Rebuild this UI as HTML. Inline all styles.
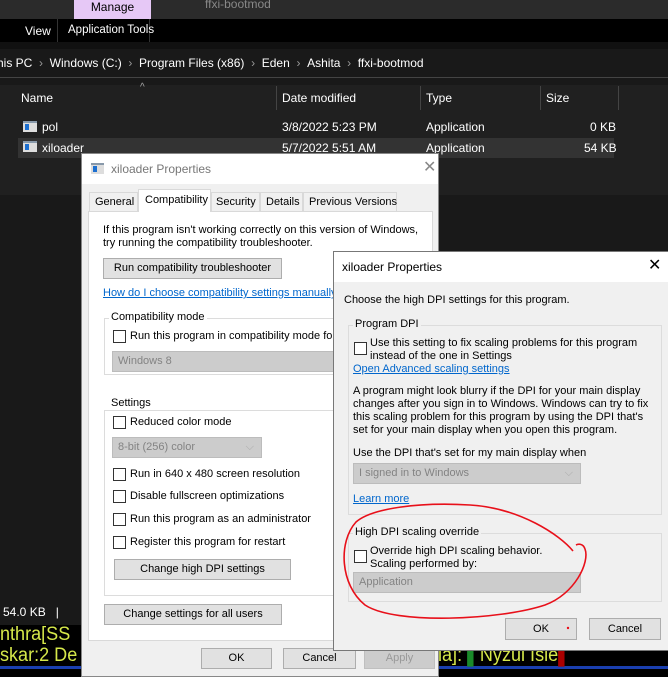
<!DOCTYPE html>
<html><head><style>
*{margin:0;padding:0;box-sizing:border-box}
body{width:668px;height:677px;overflow:hidden;background:#191919;font-family:"Liberation Sans",sans-serif;font-size:11px;position:relative;color:#000}
.a{position:absolute;white-space:nowrap}
.w{color:#fff;font-size:12px}
.btn{position:absolute;background:#e1e1e1;border:1px solid #adadad;text-align:center;font-size:11px}
.cb{position:absolute;width:13px;height:13px;border:1px solid #333;background:#fff}
.sel{position:absolute;background:#ccc;border:1px solid #bcbcbc;color:#838383;padding-left:5px}
.gb{position:absolute;border:1px solid #dcdcdc}
.lk{color:#0066cc;text-decoration:underline}
.term{position:absolute;color:#d6e84a;font-family:'Liberation Sans',sans-serif;font-size:19px;transform:scaleX(0.95);transform-origin:0 0;white-space:nowrap;line-height:21px}
</style></head><body>
<!-- explorer -->
<div class="a" style="left:0;top:0;width:668px;height:19px;background:#2b2b2b"></div>
<div class="a" style="left:74px;top:0;width:77px;height:19px;background:#e6c8f6;color:#000;text-align:center;line-height:14px;font-size:12px">Manage</div>
<div class="a" style="left:205px;top:-3px;color:#888;font-size:12px">ffxi-bootmod</div>
<div class="a" style="left:0;top:19px;width:668px;height:23px;background:#000"></div>
<div class="a w" style="left:25px;top:24px">View</div>
<div class="a" style="left:57px;top:19px;width:1px;height:23px;background:#333"></div>
<div class="a" style="left:149px;top:19px;width:1px;height:23px;background:#333"></div>
<div class="a w" style="left:68px;top:24px;font-size:11.5px">Application Tools</div>
<div class="a" style="left:0;top:42px;width:668px;height:7px;background:#111"></div>
<div class="a" style="left:0;top:77px;width:668px;height:1px;background:#444"></div>
<div class="a w" style="left:-3px;top:56px">his PC&nbsp;&nbsp;<span style="color:#999">›</span>&nbsp;&nbsp;Windows (C:)&nbsp;&nbsp;<span style="color:#999">›</span>&nbsp;&nbsp;Program Files (x86)&nbsp;&nbsp;<span style="color:#999">›</span>&nbsp;&nbsp;Eden&nbsp;&nbsp;<span style="color:#999">›</span>&nbsp;&nbsp;Ashita&nbsp;&nbsp;<span style="color:#999">›</span>&nbsp;&nbsp;ffxi-bootmod</div>
<div class="a" style="left:0;top:85px;width:668px;height:110px;background:#202020"></div>
<div class="a" style="left:140px;top:82px;color:#aaa;font-size:10px">^</div>
<div class="a w" style="left:21px;top:91px">Name</div>
<div class="a w" style="left:282px;top:91px">Date modified</div>
<div class="a w" style="left:426px;top:91px">Type</div>
<div class="a w" style="left:546px;top:91px">Size</div>
<div class="a" style="left:276px;top:86px;width:1px;height:24px;background:#444"></div>
<div class="a" style="left:420px;top:86px;width:1px;height:24px;background:#444"></div>
<div class="a" style="left:540px;top:86px;width:1px;height:24px;background:#444"></div>
<div class="a" style="left:618px;top:86px;width:1px;height:24px;background:#444"></div>
<div class="a" style="left:18px;top:138px;width:596px;height:20px;background:#333"></div>
<div class="a" style="left:23px;top:121px;width:14px;height:11px;background:#ddd;border-top:2px solid #89a"><div style="margin:1px 0 0 2px;width:4px;height:6px;background:#1c6fd0"></div></div>
<div class="a" style="left:23px;top:141px;width:14px;height:11px;background:#ddd;border-top:2px solid #89a"><div style="margin:1px 0 0 2px;width:4px;height:6px;background:#1c6fd0"></div></div>
<div class="a w" style="left:42px;top:120px">pol</div>
<div class="a w" style="left:42px;top:141px">xiloader</div>
<div class="a w" style="left:282px;top:120px">3/8/2022 5:23 PM</div>
<div class="a w" style="left:282px;top:141px">5/7/2022 5:51 AM</div>
<div class="a w" style="left:426px;top:120px">Application</div>
<div class="a w" style="left:426px;top:141px">Application</div>
<div class="a w" style="left:590px;top:120px">0 KB</div>
<div class="a w" style="left:584px;top:141px">54 KB</div>
<div class="a w" style="left:3px;top:605px">54.0 KB&nbsp;&nbsp;&nbsp;|</div>
<div class="a" style="left:0;top:625px;width:668px;height:52px;background:#000"></div>
<div class="term" style="left:0;top:624px">nthra[SS<br>skar:2 De</div>
<div class="a" style="left:0;top:666px;width:668px;height:3px;background:#1a3fb0"></div>
<div class="term" style="left:432px;top:645px">ria]: <span style="color:#1a8a2a">▌</span>Nyzul Isle<span style="color:#a00">▌</span></div>
<!-- dialog 1 -->
<div class="a" style="left:81px;top:153px;width:358px;height:524px;background:#f0f0f0;border:1px solid #888">
 <div class="a" style="left:0;top:0;width:356px;height:30px;background:#fff"></div>
 <div class="a" style="left:9px;top:9px;width:13px;height:11px;background:#ddd;border-top:2px solid #89a"><div style="margin:1px 0 0 2px;width:4px;height:6px;background:#1c6fd0"></div></div>
 <div class="a" style="left:29px;top:8px;color:#777;font-size:12px">xiloader Properties</div>
 <div class="a" style="left:341px;top:3px;color:#888;font-size:16px">✕</div>
 <div class="a" style="left:6px;top:57px;width:345px;height:430px;background:#fff;border:1px solid #d9d9d9"></div>
 <div class="a" style="left:7px;top:38px;width:49px;height:19px;border:1px solid #d9d9d9;border-bottom:0;background:#f0f0f0;padding:3px 0 0 5px">General</div>
 <div class="a" style="left:56px;top:35px;width:73px;height:23px;border:1px solid #d9d9d9;border-bottom:0;background:#fff;padding:4px 0 0 6px">Compatibility</div>
 <div class="a" style="left:129px;top:38px;width:49px;height:19px;border:1px solid #d9d9d9;border-bottom:0;background:#f0f0f0;padding:3px 0 0 4px">Security</div>
 <div class="a" style="left:178px;top:38px;width:43px;height:19px;border:1px solid #d9d9d9;border-bottom:0;background:#f0f0f0;padding:3px 0 0 5px">Details</div>
 <div class="a" style="left:221px;top:38px;width:94px;height:19px;border:1px solid #d9d9d9;border-bottom:0;background:#f0f0f0;padding:3px 0 0 5px">Previous Versions</div>
 <div class="a" style="left:21px;top:70px;line-height:13px">If this program isn't working correctly on this version of Windows,<br>try running the compatibility troubleshooter.</div>
 <div class="btn" style="left:21px;top:104px;width:179px;height:21px;line-height:19px">Run compatibility troubleshooter</div>
 <div class="a lk" style="left:21px;top:133px">How do I choose compatibility settings manually?</div>
 <div class="gb" style="left:22px;top:164px;width:260px;height:57px"></div>
 <div class="a" style="left:27px;top:157px;background:#fff;padding:0 2px">Compatibility mode</div>
 <div class="cb" style="left:31px;top:176px"></div>
 <div class="a" style="left:48px;top:176px">Run this program in compatibility mode for:</div>
 <div class="sel" style="left:30px;top:197px;width:240px;height:21px;line-height:19px">Windows 8</div>
 <div class="gb" style="left:22px;top:256px;width:260px;height:186px"></div>
 <div class="a" style="left:27px;top:243px;background:#fff;padding:0 2px">Settings</div>
 <div class="cb" style="left:31px;top:262px"></div><div class="a" style="left:48px;top:262px">Reduced color mode</div>
 <div class="sel" style="left:30px;top:283px;width:150px;height:21px;line-height:19px">8-bit (256) color<span style="position:absolute;right:7px;color:#aaa">⌵</span></div>
 <div class="cb" style="left:31px;top:314px"></div><div class="a" style="left:48px;top:314px">Run in 640 x 480 screen resolution</div>
 <div class="cb" style="left:31px;top:336px"></div><div class="a" style="left:48px;top:336px">Disable fullscreen optimizations</div>
 <div class="cb" style="left:31px;top:359px"></div><div class="a" style="left:48px;top:359px">Run this program as an administrator</div>
 <div class="cb" style="left:31px;top:382px"></div><div class="a" style="left:48px;top:382px">Register this program for restart</div>
 <div class="btn" style="left:32px;top:405px;width:177px;height:21px;line-height:19px">Change high DPI settings</div>
 <div class="btn" style="left:22px;top:450px;width:178px;height:21px;line-height:19px">Change settings for all users</div>
 <div class="btn" style="left:119px;top:494px;width:71px;height:21px;line-height:19px">OK</div>
 <div class="btn" style="left:201px;top:494px;width:73px;height:21px;line-height:19px">Cancel</div>
 <div class="btn" style="left:282px;top:494px;width:71px;height:21px;line-height:19px;color:#999;background:#ccc;border-color:#bfbfbf">Apply</div>
</div>
<!-- dialog 2 -->
<div class="a" style="left:333px;top:251px;width:336px;height:400px;background:#f0f0f0;border:1px solid #777">
 <div class="a" style="left:0;top:0;width:334px;height:30px;background:#fff"></div>
 <div class="a" style="left:8px;top:8px;font-size:12px">xiloader Properties</div>
 <div class="a" style="left:314px;top:3px;font-size:16px">✕</div>
 <div class="a" style="left:10px;top:42px">Choose the high DPI settings for this program.</div>
 <div class="gb" style="left:14px;top:73px;width:314px;height:190px"></div>
 <div class="a" style="left:19px;top:66px;background:#f0f0f0;padding:0 2px">Program DPI</div>
 <div class="cb" style="left:20px;top:90px"></div>
 <div class="a" style="left:36px;top:85px;line-height:13px">Use this setting to fix scaling problems for this program<br>instead of the one in Settings</div>
 <div class="a lk" style="left:19px;top:111px">Open Advanced scaling settings</div>
 <div class="a" style="left:19px;top:133px;line-height:13px">A program might look blurry if the DPI for your main display<br>changes after you sign in to Windows. Windows can try to fix<br>this scaling problem for this program by using the DPI that's<br>set for your main display when you open this program.</div>
 <div class="a" style="left:19px;top:195px">Use the DPI that's set for my main display when</div>
 <div class="sel" style="left:19px;top:211px;width:228px;height:21px;line-height:19px">I signed in to Windows<span style="position:absolute;right:7px;color:#aaa">⌵</span></div>
 <div class="a lk" style="left:19px;top:241px">Learn more</div>
 <div class="gb" style="left:14px;top:281px;width:314px;height:69px"></div>
 <div class="a" style="left:19px;top:274px;background:#f0f0f0;padding:0 2px">High DPI scaling override</div>
 <div class="cb" style="left:20px;top:298px"></div>
 <div class="a" style="left:36px;top:293px;line-height:13px">Override high DPI scaling behavior.<br>Scaling performed by:</div>
 <div class="sel" style="left:19px;top:320px;width:228px;height:21px;line-height:19px">Application</div>
 <div class="btn" style="left:171px;top:366px;width:72px;height:22px;line-height:20px">OK</div>
 <div class="btn" style="left:255px;top:366px;width:72px;height:22px;line-height:20px">Cancel</div>
</div>
<svg class="a" style="left:0;top:0" width="668" height="677"><path d="M573 551 C560 535,520 508,470 505 C420 502,372 508,356 522 C338 542,340 585,365 605 C395 625,500 620,545 605 C575 594,590 562,585 549 C583 543,578 544,576 545" fill="none" stroke="#e8101a" stroke-width="1.6"/><circle cx="568" cy="628" r="1.2" fill="#e8101a"/></svg>
</body></html>
